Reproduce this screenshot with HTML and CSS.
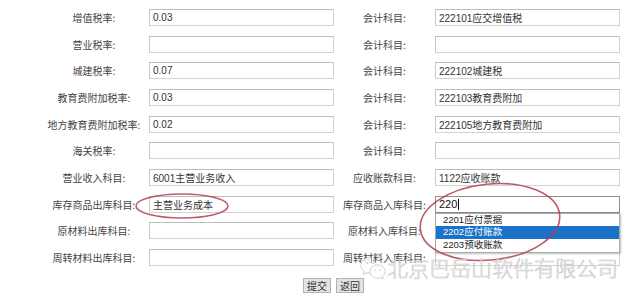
FILE: index.html
```html
<!DOCTYPE html>
<html lang="zh-CN">
<head>
    <meta charset="UTF-8">
    <meta name="viewport" content="width=device-width, initial-scale=1.0">
    <title>税率设置</title>
    <link rel="stylesheet" href="styles.css">
</head>
<body>

<div class="page">
    <form class="tax-form">
        <label class="lbl">增值税率:</label>
        <input class="field" type="text" value="0.03">
        <label class="lbl">会计科目:</label>
        <input class="field" type="text" value="222101应交增值税">

        <label class="lbl">营业税率:</label>
        <input class="field" type="text" value="">
        <label class="lbl">会计科目:</label>
        <input class="field" type="text" value="">

        <label class="lbl">城建税率:</label>
        <input class="field" type="text" value="0.07">
        <label class="lbl">会计科目:</label>
        <input class="field" type="text" value="222102城建税">

        <label class="lbl">教育费附加税率:</label>
        <input class="field" type="text" value="0.03">
        <label class="lbl">会计科目:</label>
        <input class="field" type="text" value="222103教育费附加">

        <label class="lbl">地方教育费附加税率:</label>
        <input class="field" type="text" value="0.02">
        <label class="lbl">会计科目:</label>
        <input class="field" type="text" value="222105地方教育费附加">

        <label class="lbl">海关税率:</label>
        <input class="field" type="text" value="">
        <label class="lbl">会计科目:</label>
        <input class="field" type="text" value="">

        <label class="lbl">营业收入科目:</label>
        <input class="field" type="text" value="6001主营业务收入">
        <label class="lbl">应收账款科目:</label>
        <input class="field" type="text" value="1122应收账款">

        <label class="lbl">库存商品出库科目:</label>
        <input class="field" type="text" value="主营业务成本">
        <label class="lbl">库存商品入库科目:</label>
        <div class="field-wrap">
            <div class="field field-focus">220<span class="caret"></span></div>
            <ul class="suggest">
                <li>2201应付票据</li>
                <li class="active">2202应付账款</li>
                <li>2203预收账款</li>
            </ul>
        </div>

        <label class="lbl">原材料出库科目:</label>
        <input class="field" type="text" value="">
        <label class="lbl">原材料入库科目:</label>
        <input class="field" type="text" value="">

        <label class="lbl">周转材料出库科目:</label>
        <input class="field" type="text" value="">
        <label class="lbl">周转材料入库科目:</label>
        <input class="field" type="text" value="">
    </form>

    <div class="actions">
        <button type="button" class="btn">提交</button>
        <button type="button" class="btn">返回</button>
    </div>

    <!-- red marks drawn over the screenshot -->
    <svg class="marks" width="640" height="300" viewBox="0 0 640 300">
        <ellipse cx="182" cy="206" rx="46" ry="12" />
        <ellipse cx="490" cy="222" rx="70" ry="38" transform="rotate(-6 490 222)" />
    </svg>

    <div class="watermark">
        <svg class="wm-logo" width="26" height="26" viewBox="0 0 26 26">
            <path d="M11 3 C5 3 1 7 1 11.5 C1 14 2.3 16 4.3 17.4 L3.5 20.5 L7 18.7 C8.3 19.1 9.6 19.3 11 19.3" />
            <circle cx="7.5" cy="9" r="1" />
            <circle cx="13.5" cy="9" r="1" />
            <path class="wm-front" d="M17.5 11 C22 11 25 14 25 17.6 C25 19.6 24 21.3 22.4 22.5 L23 25 L20.2 23.6 C19.3 23.9 18.4 24 17.5 24 C13 24 10 21 10 17.5 C10 14 13 11 17.5 11 Z" />
            <circle cx="15" cy="16" r="0.8" />
            <circle cx="20" cy="16" r="0.8" />
        </svg>
        <span class="wm-text">北京巴岳山软件有限公司</span>
    </div>
</div>

</body>
</html>
```

FILE: styles.css
```css
body {
    margin: 0;
    background-color: #fff;
    font-family: "Liberation Sans", "Noto Sans CJK SC", sans-serif;
    color: #333;
}
.page {
    position: relative;
    width: 640px;
    height: 300px;
    overflow: hidden;
}
.tax-form {
    display: grid;
    grid-template-columns: 110px 185px 101px 185px;
    grid-auto-rows: 17px;
    row-gap: 9.67px;
    padding: 9px 0 0 39px;
    margin: 0;
}
.lbl {
    font-family: "Noto Sans CJK SC", sans-serif;
    font-size: 10px;
    color: #444;
    text-align: center;
    line-height: 17px;
    white-space: nowrap;
}
.field {
    box-sizing: border-box;
    width: 185px;
    height: 17px;
    margin: 0;
    padding: 0 3px;
    border: 1px solid #d3d3d3;
    border-top-color: #bdbdbd;
    border-left-color: #c8c8c8;
    background-color: #fff;
    font-family: "Liberation Sans", "Noto Sans CJK SC", sans-serif;
    font-size: 10px;
    color: #333;
    line-height: 15px;
    outline: none;
}
.field-wrap {
    position: relative;
}
.field-focus {
    border-color: #8e8e8e;
    font-size: 11px;
    color: #111;
}
.caret {
    display: inline-block;
    width: 1px;
    height: 11px;
    margin-left: 1px;
    vertical-align: -2px;
    background-color: #111;
}
.suggest {
    position: absolute;
    top: 17px;
    left: 0;
    width: 185px;
    box-sizing: border-box;
    margin: 0;
    padding: 0;
    list-style: none;
    background-color: #fff;
    border: 1px solid #a8a8a8;
    box-shadow: 1px 1px 2px rgba(0, 0, 0, 0.25);
    font-family: "Liberation Sans", "Noto Sans CJK SC", sans-serif;
    font-size: 9.5px;
    color: #222;
    z-index: 2;
}
.suggest li {
    height: 12.7px;
    line-height: 12.7px;
    padding-left: 7px;
}
.suggest li.active {
    background-color: #1b72c9;
    color: #fff;
}
.actions {
    display: flex;
    gap: 5px;
    padding-left: 303px;
    margin-top: 12px;
}
.btn {
    height: 15px;
    padding: 0 3px;
    margin: 0;
    border: 1px solid #b4b4b4;
    background-color: #e3e3e3;
    font-family: "Noto Sans CJK SC", sans-serif;
    font-size: 10px;
    color: #333;
    line-height: 13px;
}
.marks {
    position: absolute;
    top: 0;
    left: 0;
    pointer-events: none;
    z-index: 3;
}
.marks ellipse {
    fill: none;
    stroke: #b23f4c;
    stroke-width: 1.6;
    opacity: 0.85;
}
.watermark {
    position: absolute;
    left: 360px;
    top: 254px;
    display: flex;
    align-items: center;
    gap: 1px;
    z-index: 4;
    pointer-events: none;
}
.wm-logo path,
.wm-logo circle {
    fill: rgba(255, 255, 255, 0.8);
    stroke: #cbcbcb;
    stroke-width: 0.9;
}
.wm-logo circle {
    fill: #cdcdcd;
    stroke: none;
}
.wm-text {
    font-family: "Noto Sans CJK SC", sans-serif;
    font-size: 21px;
    font-weight: 300;
    line-height: 24px;
    color: rgba(255, 255, 255, 0.8);
    -webkit-text-stroke: 0.6px #c6c6c6;
    white-space: nowrap;
}
```
